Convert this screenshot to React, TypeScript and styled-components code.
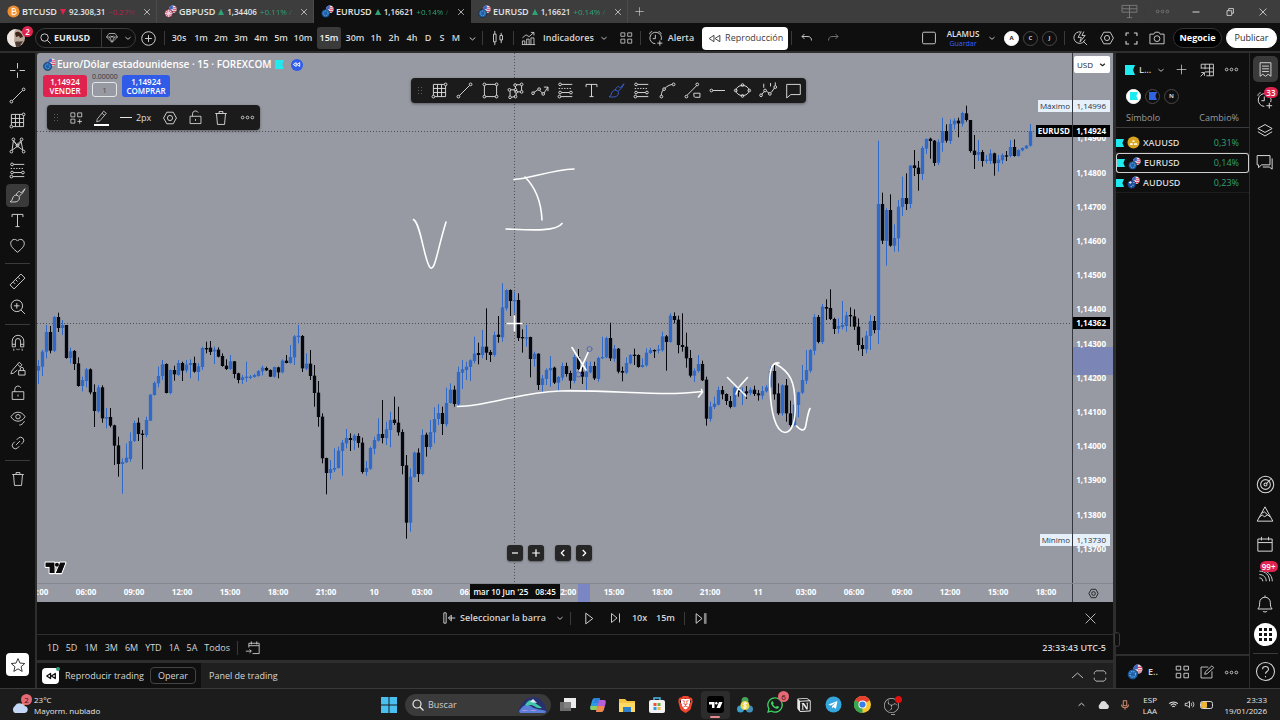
import React from 'react';
import styled, { createGlobalStyle, css } from 'styled-components';
import { FaTelegramPlane, FaWhatsapp } from 'react-icons/fa';
import { SiBrave, SiNotion, SiObsstudio } from 'react-icons/si';

const color = {
  frame: '#2e2e2e',
  panel: '#0f0f0f',
  raised: '#1f1f1f',
  line: '#3a3a3a',
  text: '#d6d6d6',
  chart: '#979aa3',
  up: '#2f69c9',
  down: '#06080d',
  green: '#2fa377',
  red: '#e0234e',
  blue: '#2f5be8',
  cyan: '#1feaf0',
};

const GlobalStyle = createGlobalStyle`
  *, *::before, *::after { box-sizing: border-box; }
  body { margin: 0; background: ${color.frame}; }
  body, button, input, select, table {
    font-family: 'Trebuchet MS', 'Open Sans', 'Noto Sans', sans-serif;
    font-size: 9px;
    line-height: 12px;
    color: ${color.text};
  }
  button { border: 0; padding: 0; background: none; cursor: pointer; }
  svg { display: block; flex: none; }
`;

/* ---------- line icons, drawn on a 28 unit grid ---------- */

const dot = (x: number, y: number, r = 2) => <circle key={`${x}-${y}`} cx={x} cy={y} r={r} />;

const ICONS = {
  cross: <path d="M14 3v8M14 17v8M3 14h8M17 14h8" />,
  trend: <>{dot(5, 23)}{dot(23, 5)}<path d="M6.5 21.5l15-15" /></>,
  grid: <><path d="M5 21V5h16M23 7v16H7M5 11h18M5 17h18M11 5v18M17 5v18" />{dot(23, 5)}{dot(5, 23)}</>,
  pattern: <><path d="M6 21L8 7l5 6 6-6 3 14-8-6-8 6M9 8l5 7 6-7" />{dot(5, 23)}{dot(8, 5)}{dot(14, 14)}{dot(20, 5)}{dot(23, 23)}</>,
  fib: <><path d="M8 5h16M8 17h12M7 23h17" /><path d="M4 11h20" strokeDasharray="2 2" />{dot(6, 5)}{dot(6, 17)}{dot(22, 17)}{dot(5, 23)}</>,
  brush: <path d="M3 23c3-.5 3-3 4-5.500s3-4.500 6-4 4.500 3.500 3.500 6-3.500 4-6.500 4c-3 0-5 .5-7-.5zM12 13.500c1-3 3-5.500 5-5.500 1 0 1 2 2 2s3-3 6-6c-2 5-5 8.500-8.500 11" />,
  text: <path d="M6 9V5h16v4M14 5v18M11 23h6" />,
  heart: <path d="M14 24C8 19 4 15.500 4 11c0-3.500 2.500-6 5.500-6 2 0 3.500 1 4.500 2.500C15 6 16.500 5 18.500 5c3 0 5.500 2.500 5.500 6 0 4.500-4 8-10 13z" />,
  ruler: <path d="M3 19L19 3l6 6L9 25zM8 15l2.500 2.500M11.500 11.500L14 14M15 8l2.500 2.500" />,
  zoomIn: <><circle cx="13" cy="13" r="8.500" /><path d="M19 19l6 6M13 9v8M9 13h8" /></>,
  magnet: <path d="M5 20v-9a9 9 0 0 1 18 0v9h-5v-9a4 4 0 0 0-8 0v9zM5 16h5M18 16h5M7.500 23v3M20.500 23v3M12 23l1 2M16 23l-1 2" />,
  pencilLock: <path d="M13 17l-6 5-4 1 1-4L16 5l4 4-3 4M13 8l4 4M15 18h10v7H15zM17.500 18v-2.500a2.500 2.500 0 0 1 5 0V18" />,
  lock: <path d="M5 12h18v12H5zM9 12V8a5 5 0 0 1 9.500-2M14 16.500v3" />,
  eye: <><path d="M3 12c3-5 7-7 11-7s8 2 11 7c-3 5-7 7-11 7S6 17 3 12z" /><circle cx="14" cy="12" r="3.500" /><path d="M16 25c3 0 6-2 8-6" /></>,
  link: <path d="M11 17l6-6M12 9l3-3a5 5 0 0 1 7 7l-3 3M16 19l-3 3a5 5 0 0 1-7-7l3-3" />,
  trash: <path d="M5 7h18M7 7l1.500 17h11L21 7M11 7V4h6v3" />,
  star: <path d="M14 4l3 7 7.500.700-5.700 5 1.700 7.300L14 20l-6.500 4 1.700-7.300-5.700-5L11 11z" />,
  search: <><circle cx="12" cy="12" r="8" /><path d="M18 18l7 7" /></>,
  gem: <path d="M8 5h12l5 7-11 11L3 12zM3 12h22M9 12l5 10 5-10M11 9l3 3 3-3" />,
  plusCircle: <><circle cx="14" cy="14" r="10" /><path d="M14 9v10M9 14h10" /></>,
  plus: <path d="M14 5v18M5 14h18" />,
  chevron: <path d="M8 12l6 5 6-5" />,
  chevronUp: <path d="M5 18l9-8 9 8" />,
  candles: <path d="M7 8h4v12H7zM9 3v5M9 20v5M17 10h4v7h-4zM19 6v4M19 17v5" />,
  indicators: <path d="M4 24v-6h4v6M11 24v-9h4v9M18 24V13h5v11M3 24h22M4 13l6-5 5 3 8-7M18 4h5v5" />,
  layouts: <path d="M5 5h7v6H5zM17 5h7v6h-7zM5 16h7v7H5zM17 16h7v7h-7z" />,
  layoutsPlus: <path d="M5 5h7v7H5zM17 5h7v7h-7zM5 16h7v7H5zM20.500 16v8M16.500 20h8" />,
  alarm: <path d="M22 17a9 9 0 1 0-9 6M13 9v6h-4M4 8c0-2 2-4 4-4M18 4c2 0 4 2 4 4M20 18v8M16 22h8" />,
  rewind: <path d="M13 8v12l-9-6zM24 8v12l-9-6z" />,
  undo: <path d="M9 6L4 11l5 5M4 11h12c4 0 7 3 7 8" />,
  redo: <path d="M19 6l5 5-5 5M24 11H12c-4 0-7 3-7 8" />,
  square: <rect x="4" y="5" width="20" height="18" rx="2" />,
  quick: <path d="M15 4.500a9 9 0 1 0 7 12M19 19l6 6M16 4l-5 9h5l-2 7 8-10h-5l3-6" />,
  hex: <><path d="M9 5h10l5 9-5 9H9l-5-9z" /><circle cx="14" cy="14" r="4" /></>,
  fullscreen: <path d="M5 10V5h5M18 5h5v5M23 18v5h-5M10 23H5v-5" />,
  camera: <><path d="M3 8h6l2-3h6l2 3h6v15H3z" /><circle cx="14" cy="15" r="4.500" /></>,
  more: <>{dot(6, 14, 2.200)}{dot(14, 14, 2.200)}{dot(22, 14, 2.200)}</>,
  rectangle: <><path d="M7 5h14M7 23h14M5 7v14M23 7v14" />{dot(5, 5)}{dot(23, 5)}{dot(5, 23)}{dot(23, 23)}</>,
  polygon: <><path d="M7 13h5M14 11V8M15 5.500h6M23 7v7M21 16h-4M15 18v3M13 23l-5 1M6 22v-7" />{dot(13.5, 6)}{dot(23, 5)}{dot(5, 13)}{dot(14, 13)}{dot(23, 16)}{dot(15, 16)}{dot(14, 23)}{dot(6, 24)}</>,
  polyline: <><path d="M4 17l6-4M13 14l4 4M19 18l6-9M19 9h6v6" />{dot(3, 18)}{dot(12, 12)}{dot(18, 19)}</>,
  curve: <><path d="M5 21c0-4 1-6 3-8M10 11c3-3 6-5 11-6" />{dot(5, 23)}{dot(23, 5)}{dot(9, 12)}</>,
  segment: <><path d="M6 21L20 7M16 18h9v6h-7c-2 0-2-2-2-6z" />{dot(5, 23)}{dot(21, 5)}</>,
  ray: <><path d="M7 14h18" />{dot(5, 14)}</>,
  ellipse: <><ellipse cx="14" cy="14" rx="9.500" ry="7.500" />{dot(4, 14)}{dot(24, 14)}{dot(14, 6)}{dot(14, 22)}</>,
  elliott: <><path d="M4 20l4-5M11 15l4 3M18 17l5-7M7 4v6M17 3v5M24 2v5" />{dot(3, 21)}{dot(9, 14)}{dot(16, 19)}{dot(24, 9)}</>,
  comment: <path d="M4 5h20v15H10l-6 5z" />,
  pen: <path d="M6 19L18 4l5 4-12 14-6 2zM15 8l5 4" />,
  layers: <path d="M14 5l10 5.500L14 16 4 10.500zM4 15l10 6 10-6" />,
  chat: <path d="M3 5h18v13H9l-4 4v-4H3zM24 9v15l-4-3h-9" />,
  list: <path d="M6 4h16v20l-4-3-4 3-4-3-4 3zM9 9h10M9 13h10M9 17h10" />,
  table: <path d="M5 12V5h19v18H13M5 11h19M11 17h13M11 5v8M18 5v18M4 24l6-6M5 18h5v5" />,
  radar: <><circle cx="14" cy="14" r="11" /><circle cx="14" cy="14" r="6.500" /><circle cx="14" cy="14" r="2" /><path d="M15.500 12.500L21 7" /></>,
  mountain: <path d="M14 4l11 20H3L14 4M9 13l4-2 8 7M6 19l4-4 3 3 5-3" />,
  calendar: <path d="M4 7h20v17H4zM4 12h20M9 4v5M19 4v5" />,
  goTo: <path d="M8 14V7h17v17H14M8 11h17M12 4v5M21 4v5M3 20h9M9 17l3 3-3 3" />,
  feed: <path d="M5 19c3 0 5 2 5 5M5 14c6 0 10 4 10 10M5 9c9 0 15 6 15 15M14 9c6 3 10 8 10 15" />,
  bell: <path d="M4 21h20c-2-2-2.500-4-2.500-9a7.500 7.500 0 0 0-15 0c0 5-.5 7-2.500 9zM11 24c1 1.500 5 1.500 6 0M14 4V2" />,
  help: <><circle cx="14" cy="14" r="12" /><path d="M10 11c0-5 8-5 8 0 0 3-4 3-4 6M14 20v1.500" /></>,
  edit: <path d="M17 5H5v18h18V12M11 17l1-4L23 3l3 3-11 10z" />,
  replayPick: <path d="M5 5h4v18H5zM25 14H13M18 9l-5 5 5 5z" />,
  play: <path d="M9 4l13 10L9 24z" />,
  step: <path d="M5 5l11 9-11 9zM21 5v18" />,
  skip: <><path d="M4 5l11 9-11 9z" /><path d="M21 4v20" strokeWidth="5" opacity="0.600" /></>,
  close: <path d="M6 6l16 16M22 6L6 22" />,
  minus: <path d="M7 14h14" />,
  left: <path d="M17 7l-7 7 7 7" />,
  right: <path d="M11 7l7 7-7 7" />,
  restore: <path d="M7 11h11v11H7zM11 11V6h11v11h-4" />,
  workspace: <path d="M3 5h22v10H3zM3 10h22M14 5v10M14 15v8M10 23h8" />,
  full: <path d="M4 11V8l3-3h14l3 3v3M24 17v3l-3 3H7l-3-3v-3" />,
  mic: <path d="M10 4h8v12h-8zM6 13c0 10 16 10 16 0M14 21v4" />,
  wifi: <path d="M3 12c6-6 16-6 22 0M7 16c4-4 10-4 14 0M11 20c2-2 4-2 6 0" />,
  sound: <path d="M3 11h5l6-5v16l-6-5H3zM18 10c2 2 2 6 0 8M22 7c4 4 4 10 0 14" />,
};
type IconName = keyof typeof ICONS;

const Icon = ({ name, size = 19, weight = 1.4, tone = 'currentColor' }:
  { name: IconName; size?: number; weight?: number; tone?: string }) => (
  <svg width={size} height={size} viewBox="0 0 28 28" fill="none" stroke={tone} strokeWidth={weight}
    strokeLinejoin="round" aria-hidden="true">{ICONS[name]}</svg>
);

const PairIcon = ({ size = 14, kind = 'eu' }: { size?: number; kind?: 'eu' | 'gb' | 'au' | 'gold' | 'btc' }) => {
  if (kind === 'gold') {
    return (
      <svg width={size} height={size} viewBox="0 0 14 14"><circle cx="7" cy="7" r="6.500" fill="#d9a420" />
        <path d="M5.500 6.500l.6-2h1.800l.6 2zM2.800 9.800l.6-2.200h2.600l.6 2.200zM7.400 9.800L8 7.600h2.600l.6 2.200z" fill="#fff3cf" /></svg>
    );
  }
  if (kind === 'btc') {
    return (
      <svg width={size} height={size} viewBox="0 0 14 14"><circle cx="7" cy="7" r="6.500" fill="#ef8e2c" />
        <path d="M5.500 4v6M5 4h3c2 0 2 2.800 0 2.800H5.500h3c2 0 2 3.200 0 3.200H5M6.300 3v1M7.800 3v1M6.300 10v1M7.800 10v1" stroke="#fff" fill="none" /></svg>
    );
  }
  const front = kind === 'gb' ? '#d96a8a' : kind === 'au' ? '#1c4fa0' : '#1d62ac';
  return (
    <svg width={size} height={size} viewBox="0 0 14 14">
      <circle cx="9.500" cy="4.500" r="4" fill="#e9e4ee" />
      <path d="M9.500 3h4M9.500 5h4M7 7h6" stroke="#d8405c" />
      <path d="M9.500.5v4h-4a4 4 0 0 1 4-4z" fill="#3c62c4" />
      <circle cx="5" cy="9" r="4.500" fill={front} stroke={color.panel} strokeWidth="0.500" />
      {kind === 'eu' && <circle cx="5" cy="9" r="2.500" fill="none" stroke="#7fb6dd" strokeDasharray="1 1" />}
      {kind === 'gb' && <path d="M5 5v8M1 9h8M2.500 6.500l5 5M7.500 6.500l-5 5" stroke="#f6dfe6" />}
      {kind === 'au' && <path d="M2 7h3M3.500 5.500v3M6 10h1M7 7h1M4 11.500h1" stroke="#e8dff0" />}
    </svg>
  );
};

const Flag = ({ size = 10, tone = color.cyan }: { size?: number; tone?: string }) => (
  <svg width={size} height={size} viewBox="0 0 10 10" aria-hidden="true"><path d="M0 0h10L8 5l2 5H0z" fill={tone} /></svg>
);

/* ---------- shared pieces ---------- */

const Page = styled.div`
  display: flex; flex-direction: column; min-height: 100vh; background: ${color.frame};
`;
const Row = styled.div<{ $gap?: number }>`
  display: flex; align-items: center; gap: ${p => p.$gap ?? 0}px;
`;
const Spacer = styled.div`flex: 1;`;
const Divider = styled.i<{ $h?: number; $before?: number; $after?: number }>`
  flex: none; width: 1px; height: ${p => p.$h ?? 14}px; background: ${color.line};
  margin-left: ${p => p.$before ?? 0}px; margin-right: ${p => p.$after ?? 0}px;
`;
const IconButton = styled.button<{ $w?: number; $dim?: boolean }>`
  flex: none; display: flex; align-items: center; justify-content: center;
  width: ${p => p.$w ?? 25}px; height: 24px;
  color: ${p => (p.$dim ? '#7a7a7a' : color.text)};
`;
const Badge = styled.span`
  position: absolute; top: 0; right: 0; min-width: 11px; height: 11px; padding: 0 2px; border-radius: 6px;
  background: ${color.red}; color: #fff; font-size: 8px; line-height: 11px; text-align: center; font-weight: 600;
`;

/* ---------- window tabs ---------- */

const TabBar = styled.nav`
  display: flex; align-items: center; height: 23px; background: #3d3d3d;
`;
const Tab = styled.div<{ $active?: boolean }>`
  display: flex; align-items: center; width: 157px; height: 23px; padding-left: 7px; gap: 2px;
  border-right: 1px solid ${p => (p.$active ? color.panel : '#4b4b4b')};
  background: ${p => (p.$active ? color.panel : 'transparent')};
`;
const TabLink = styled.a`
  flex: 1; display: flex; align-items: center; gap: 3px; white-space: nowrap;
  color: #e4e4e4; font-size: 8px; font-weight: 600; text-decoration: none;
  strong { font-size: 9px; font-weight: 600; }
`;
const Trend = styled.span<{ $down?: boolean }>`
  color: ${p => (p.$down ? '#b8264c' : color.green)}; font-weight: 500;
  mask-image: linear-gradient(90deg, #000 75%, rgba(0, 0, 0, 0.4));
`;
const Arrow = ({ down }: { down?: boolean }) => (
  <svg width="6" height="6" viewBox="0 0 6 6"><path d={down ? 'M0 0h6L3 6z' : 'M0 6h6L3 0z'} fill={down ? color.red : color.green} /></svg>
);

const TABS = [
  { kind: 'btc' as const, name: 'BTCUSD', price: '92.308,31', pct: '−0.27%', down: true },
  { kind: 'gb' as const, name: 'GBPUSD', price: '1,34406', pct: '+0.11% /' },
  { kind: 'eu' as const, name: 'EURUSD', price: '1,16621', pct: '+0.14% /', active: true },
  { kind: 'eu' as const, name: 'EURUSD', price: '1,16621', pct: '+0.14% /' },
];

/* ---------- top toolbar ---------- */

const Toolbar = styled.header`
  display: flex; align-items: center; height: 28px; padding: 2px 3px 0 5px; background: ${color.panel};
`;
const AvatarBox = styled.div`position: relative; width: 28px; height: 24px; padding-top: 3px; margin-right: 2px;`;
const SearchPill = styled.div`
  display: flex; align-items: center; width: 101px; height: 20px; border: 1px solid #3c3c3c; border-radius: 10px;
`;
const SymbolButton = styled.button`
  display: flex; align-items: center; gap: 2px; width: 66px; height: 18px; padding-left: 3px;
  border-right: 1px solid #3c3c3c; font-weight: 700; color: #e8e8e8;
`;
const Interval = styled.button<{ $w: number; $on?: boolean }>`
  width: ${p => p.$w}px; height: 22px; font-weight: 600;
  ${p => p.$on && css`margin: 0 2px; border-radius: 3px; background: #3b3b3b; color: #f0f0f0;`}
`;
const TextButton = styled.button`
  display: flex; align-items: center; gap: 3px; height: 24px; font-weight: 600; white-space: nowrap;
`;
const ReplayButton = styled.button`
  display: flex; align-items: center; justify-content: center; gap: 3px; width: 86px; height: 23px;
  margin: 0 3px 0 8px; border-radius: 4px; background: #fff; color: #3c3c3c; white-space: nowrap;
`;
const LayoutName = styled.button`
  width: 38px; font-size: 8px; font-weight: 600; line-height: 11px; color: #e2e2e2;
  small { display: block; font-size: 7px; line-height: 9px; font-weight: 400; color: #3763ff; }
`;
const Round = styled.button<{ $on?: boolean }>`
  width: 15px; height: 15px; margin: 0 2px; border-radius: 50%; font-size: 6px; font-weight: 700; line-height: 13px;
  border: 1px solid ${p => (p.$on ? '#fff' : '#484848')};
  display: flex; align-items: center; justify-content: center;
  background: ${p => (p.$on ? '#fff' : 'transparent')}; color: ${p => (p.$on ? '#222' : '#ccc')};
`;
const Pill = styled.button<{ $solid?: boolean }>`
  height: 20px; border-radius: 10px; font-size: 9px; font-weight: ${p => (p.$solid ? 500 : 700)};
  width: ${p => (p.$solid ? 51 : 49)}px; display: flex; align-items: center; justify-content: center;
  border: 1px solid ${p => (p.$solid ? '#fff' : '#333')}; margin-left: 4px;
  background: ${p => (p.$solid ? '#fff' : '#000')}; color: ${p => (p.$solid ? '#2c2c2c' : '#fff')};
`;

const INTERVALS: [string, number][] = [
  ['30s', 24], ['1m', 20], ['2m', 20], ['3m', 20], ['4m', 20], ['5m', 20], ['10m', 24], ['15m', 24],
  ['30m', 24], ['1h', 18], ['2h', 18], ['4h', 18], ['D', 14], ['S', 14], ['M', 14],
];

/* ---------- body layout ---------- */

const Main = styled.main`flex: 1; display: flex; margin-top: 2px;`;
const LeftRail = styled.aside`
  width: 35px; margin-right: 2px; padding: 5px 0 11px; background: ${color.panel};
  display: flex; flex-direction: column; align-items: center;
`;
const Tool = styled.button<{ $on?: boolean; $light?: boolean }>`
  flex: none; display: flex; align-items: center; justify-content: center; width: 23px; height: 23px; margin: 1px 0;
  border-radius: 4px; color: ${p => (p.$light ? '#222' : color.text)};
  background: ${p => (p.$light ? '#fff' : p.$on ? '#3a3a3a' : 'transparent')};
`;
const RailLine = styled.i<{ $tight?: boolean }>`
  flex: none; width: 25px; height: 1px; margin: ${p => (p.$tight ? '2px 0 4px' : '5px 0')}; background: ${color.line};
`;
const Center = styled.section`flex: 1; min-width: 0; display: flex; flex-direction: column;`;

/* ---------- chart ---------- */

const PlotRow = styled.div`
  flex: 1; min-height: 400px; position: relative; display: flex; background: ${color.chart}; border-top-left-radius: 3px;
`;
const Plot = styled.div`flex: 1; min-width: 0; position: relative;`;
const PlotSvg = styled.svg`position: absolute; inset: 0; width: 100%; height: 100%;`;
const PriceAxis = styled.div`
  position: relative; width: 41px; border-left: 1px solid #33363d; display: flex; flex-direction: column;
  text-align: right; padding-right: 7px; font-size: 8px; font-weight: 700; color: #fff;
`;
const PriceTick = styled.div`position: relative; flex: 34; display: flex; align-items: center; justify-content: flex-end;`;
const Gap = styled.div<{ $n: number }>`flex: ${p => p.$n};`;
const Band = styled.i`
  position: absolute; left: 0; right: 0; top: 55.5%; height: 5.300%; background: #7b86b6;
`;
const Tag = styled.div<{ $y: number; $tone: 'light' | 'dark' }>`
  position: absolute; right: 3px; top: ${p => p.$y}%; display: flex; gap: 1px; height: 12px; margin-top: -6px;
  font-size: 8px; line-height: 12px; font-weight: ${p => (p.$tone === 'dark' ? 700 : 400)};
  color: ${p => (p.$tone === 'dark' ? '#fff' : '#2b3240')};
  span { padding: 0 2px; background: ${p => (p.$tone === 'dark' ? '#000' : '#e6f0fb')}; }
  span:last-child { width: 37px; padding: 0 4px 0 0; text-align: right; }
`;
const CurrencyBox = styled.label`
  position: absolute; top: 3px; right: 3px; width: 36px; height: 17px; border-radius: 2px; background: #fff; color: #222;
  svg { position: absolute; right: 2px; top: 3px; }
  select { width: 100%; height: 17px; padding: 0 3px; border: 0; appearance: none; background: none; color: #222; font-size: 8px; }
`;
const TimeRow = styled.div`
  display: flex; height: 19px; background: ${color.chart}; border-top: 1px solid #85878f;
`;
const TimeAxis = styled.div`position: relative; flex: 1; min-width: 0; overflow: hidden;`;
const TimeTicks = styled.div`
  position: relative; display: flex; margin: 0 2px 0 -23px; height: 16px; align-items: center;
  span { flex: 1; text-align: center; font-size: 8px; font-weight: 700; color: #fff; }
`;
const TimeBand = styled.i`position: absolute; left: 52.300%; width: 12px; top: 0; bottom: 0; background: #7b86c4;`;
const TimeTag = styled.div`
  position: absolute; left: 41.800%; top: 0; width: 90px; height: 15px; background: #0c0c0c; color: #fff;
  font-size: 8px; line-height: 16px; font-weight: 600; white-space: pre; display: flex; justify-content: center; gap: 7px;
`;
const AxisCorner = styled.button`
  width: 41px; border-left: 1px solid #33363d; color: #222; display: flex; align-items: center; justify-content: center;
`;

const Legend = styled.div`position: absolute; left: 6px; top: 4px; display: flex; flex-direction: column; gap: 2px;`;
const Title = styled.h1`margin: 0; font-size: 10px; line-height: 15px; font-weight: 600; color: #fff; white-space: nowrap;`;
const Marks = styled.div`display: flex; align-items: center; gap: 7px; margin-left: 2px;`;
const ReplayDot = styled.span`
  display: flex; align-items: center; justify-content: center; width: 12px; height: 12px; border-radius: 50%; background: ${color.blue};
`;
const Trade = styled.button<{ $buy?: boolean }>`
  width: ${p => (p.$buy ? 48 : 44)}px; height: 22px; border-radius: 3px; color: #fff; font-size: 8px; line-height: 9px; font-weight: 600;
  background: ${p => (p.$buy ? color.blue : color.red)};
`;
const Quantity = styled.label`
  display: block; width: 25px; font-size: 7px; line-height: 6px; color: #33363d; text-align: center;
  input { display: block; width: 25px; height: 15px; margin-top: 2px; border: 1px solid #e4e6ea; border-radius: 3px; background: none;
    color: #4b4e57; font-size: 8px; text-align: center; padding: 0; }
`;
const Floating = styled.div<{ $x: number; $y: number; $w: number }>`
  position: absolute; left: ${p => p.$x}px; top: ${p => p.$y}px; width: ${p => p.$w}px; height: 25px; display: flex;
  align-items: center; border-radius: 4px; background: #1b1b1b; box-shadow: 0 1px 3px rgba(0, 0, 0, 0.4);
  > button { flex: 1; display: flex; align-items: center; justify-content: center; color: #dcdcdc; }
`;
const Grip = styled.i`
  flex: none; width: 6px; height: 10px; margin: 0 4px 0 6px; opacity: 0.6;
  background: radial-gradient(circle, #888 40%, transparent 45%) 0 0 / 3px 3px;
`;
const PenTool = styled.button`
  flex-direction: column;
  &::after { content: ''; width: 15px; height: 2px; background: #fff; }
`;
const WidthTool = styled.button`
  gap: 4px; min-width: 42px; font-size: 9px;
  &::before { content: ''; width: 12px; height: 1px; background: #e4e4e4; }
`;
const ZoomControls = styled.div`
  position: absolute; left: 45.400%; bottom: 22px; display: flex; gap: 5px;
  button { display: flex; align-items: center; justify-content: center; width: 16px; height: 16px; border-radius: 3px;
    background: #262626; color: #fff; box-shadow: 0 1px 2px rgba(0, 0, 0, 0.4); }
  button:nth-child(3) { margin-left: 6px; }
`;
const Brand = styled.a`position: absolute; left: 7px; bottom: 8px;`;

/* Each bar: direction, then high, body top, body bottom and low. */
const SERIES: { base: number; bars: string }[] = [
  {
    base: 651,
    bars: `U270 288 302 342,U240 245 290 318,U165 186 245 265,D168 186 242 250,U138 141 242 246,D128 141 174 186,U150 165 174 195,D165 165 264 266,U233 244 264 280,D240 243 282 300,D262 280 348 350,U320 330 348 364,U294 298 333 352,D295 298 367 373,D343 366 423 471,U345 352 424 428,D346 352 445 458,U414 441 446 475,D414 441 467 472,D464 466 527 585,D500 526 582 620,U565 576 582 671,U520 563 577 579,U487 513 567 575,U452 459 513 516,D443 458 492 513,D480 491 494 598,U440 450 495 502,U372 374 452 453,U334 339 375 377,U290 318 340 352,U270 283 318 330,D280 282 369 370,U298 300 369 373,D287 300 313 332,U270 279 315 317,D275 279 302 333,U270 284 301 308,U268 279 285 325,D260 279 305 308,U280 289 306 332,U230 234 291 300,D215 234 237 250,D213 233 246 255,U230 239 244 282,D232 239 260 262,D250 258 288 290,D268 287 297 300,U255 274 297 300,D273 274 312 325,D308 310 330 340,U315 322 330 342,U275 320 323 336,U315 320 323 327,U311 315 321 323,U300 303 318 320,U287 293 304 316,D290 294 301 303,D298 300 320 321,U290 291 320 323,D290 292 307 325,U268 272 307 310,D255 272 279 280,U225 261 279 281,U195 199 262 285,U165 197 200 220,D195 198 295 306,U250 281 296 300,D240 281 318 330,D285 317 369 410,D333 368 441 470,D430 440 565 580,D563 564 609 673,U570 597 609 628,U535 594 599 606,U530 542 594 596,U510 518 543 617,U477 504 520 535,D490 504 510 543,U492 497 512 540,D490 498 519 533,D503 518 606 611,U573 594 606 617,U530 534 596 600,U500 510 536 553,U445 492 512 515,D390 492 504 520,U455 478 504 525,U425 450 480 532,D380 449 459 465,D410 458 487 497,D478 486 588 613,D555 586 758 806,U595 620 758 785,U545 548 621 623,D535 548 612 636,U478 495 612 616,D488 494 531 560,U450 486 531 538,U412 447 487 520,U402 429 447 465,D410 429 462 495,U353 399 463 470,U340 359 399 400,D347 359 402 410,U290 306 403 408,U270 298 308 357,U275 290 300 330,U268 271 291 333,U200 251 273 280,D218 249 255 283,U180 230 255 265,D115 230 248 270,D240 246 255 276,U185 195 255 260,D138 194 201 218,U40 112 202 215,U58 60 115 122,D58 60 93 138,U65 90 94 130,D70 90 204 213,D178 201 204 248,U165 202 204 230,D200 201 267 322,U245 251 267 290,D250 251 345 360,U315 325 345 368,U295 300 327 345,U258 294 301 350,D290 293 338 342,U318 321 338 365,U278 288 323 332,D278 288 312 320,D302 309 332 356,U255 261 333 340,D237 261 297 300,D290 305 320 342,U275 305 321 363,U275 288 307 310,D275 288 325 330,U260 264 327 335,U200 261 265 267,U200 204 262 265,D158 204 265 273,U225 236 266 275,D234 236 305 310,D290 303 308 334,U262 279 308 312,U252 255 280 283,D236 254 257 285,D253 255 291 293,U265 285 291 293,U235 248 286 290,U233 240 249 252,D238 240 243 264,U225 238 242 250,U185 199 241 245,D195 199 216 302,U130 137 216 218,D127 138 150 160,D137 149 225 250,D130 225 231 245,D188 230 265 293,D240 264 317 322,U295 302 317 336,U255 282 303 308,D272 282 331 333,D320 329 446 467,U395 410 447 455,U380 401 411 417,U350 360 404 406,D348 360 373 388,D370 372 393 405,D378 393 411 415,U350 353 410 412,D350 353 366 380,U352 366 368 405,D348 364 370 387,U352 359 369 376,D347 359 372 378,D360 370 376 392,U348 363 377 388,U345 352 364 368,U290 303 352 354,D285 303 373 389,D340 370 430 435,U343 346 430 437,D327 346 430 455,D392 430 465 470,U380 404 465 467,U365 367 405 442,U285 330 368 372,U240 300 332 342,U237 240 302 308,U133 141 242 255,D135 141 216 220,U102 110 216 222,D88 111 116 150,D58 114 147 150,D143 147 177 192,U145 168 176 190,U93 165 171 178,U125 136 168 185,D112 135 139 170,D118 139 170 180,D145 170 225 242,D203 225 237 258,U183 197 238 250,U135 153 198 240,D138 153 180 190`,
  },
  {
    base: 111,
    bars: `U152 342 720 762,D308 342 452 462,U355 360 453 527,D313 360 467 470,U403 444 467 485,U330 350 445 485,U260 324 351 378,D250 324 342 360,U225 227 342 355,D180 226 234 258,D213 233 252 302,U168 174 252 270,U145 147 176 192,D143 146 153 206,D150 152 219 228,U148 156 218 225,U83 123 158 185,D103 123 152 158,U88 102 153 162,U85 92 103 118,D83 92 100 142,U65 69 101 110,D47 70 90 95,D90 90 183 188,D135 182 195 237,U150 186 194 213,D180 186 213 230,U195 209 212 220,U178 190 213 222,D188 190 220 257,U195 209 219 245,U190 195 211 222,D183 196 199 213,U150 171 198 202,D148 171 198 200,U178 180 198 200,U172 174 181 184,U165 167 175 177,U102 123 167 170`,
  },
];
const CANDLES = SERIES.flatMap(({ base, bars }) => bars.split(',').map(bar => {
  const [high, top, bottom, low] = bar.slice(1).split(' ').map(v => Number(v) + base);
  return { up: bar[0] === 'U', high, top, bottom, low };
}));

const PriceChart = () => (
  <PlotSvg viewBox="0 0 3105 1590" preserveAspectRatio="none" role="img" aria-label="EURUSD, 15 minutos">
    <g stroke="#4d5059" strokeDasharray="1 2">
      <path d="M0 235.500h3105M0 811.500h3105M1432.500 0v1590" vectorEffect="non-scaling-stroke" />
    </g>
    {CANDLES.map((c, i) => (
      <g key={i} fill={c.up ? color.up : color.down}>
        <rect x={3 + 12 * i} y={c.high} width="3" height={c.low - c.high} />
        <rect x={-0.5 + 12 * i} y={c.top} width="10" height={Math.max(4, c.bottom - c.top)} />
      </g>
    ))}
    <g transform="scale(3) translate(-37 -53)" fill="none" stroke="#fff" strokeWidth="1.600" strokeLinecap="round" strokeLinejoin="round">
      <path d="M413.500 219.500C421 224 424 260 430 267.500C435 272 437 251 446 222" />
      <path d="M514 179.500C530 179 550 170 574 169M525 177C532 184 541 197 542 220M506 229C530 230 556 232 562 223.500" />
      <path d="M457.500 406.500C490 406 515 393 560 391C600 390 640 394 675 393.500C688 393 696 392 702 391.500M701.500 389.500L702.500 392L698.500 397" />
      <path d="M572 347.500L586 370M588 352.500C585 360 582 365 580 371" />
      <path d="M727.500 377.500L746 396M747.500 377.500L739 387L736 394" />
      <path d="M779 363C770 361 769 376 770 390C771 410 775 432 785 432.500C793 432 796 418 795 403C795 382 790 372 776 364" />
      <path d="M796.500 426C800 430 804 432 805.500 427C807 420 808 412 810 408.500" />
      <g stroke="#5468b4" strokeWidth="1"><circle cx="589.500" cy="349" r="2.500" /><circle cx="578.500" cy="374.500" r="2.500" /></g>
      <path d="M506.500 323.500h16M514.500 315.500v16" strokeLinecap="butt" />
    </g>
  </PlotSvg>
);

const PRICES = ['1,14900', '1,14800', '1,14700', '1,14600', '1,14500', '1,14400', '1,14300', '1,14200', '1,14100',
  '1,14000', '1,13900', '1,13800', '1,13700'];
const TIMES = ['03:00', '06:00', '09:00', '12:00', '15:00', '18:00', '21:00', '10', '03:00', '06:00', '09:00', '12:00',
  '15:00', '18:00', '21:00', '11', '03:00', '06:00', '09:00', '12:00', '15:00', '18:00'];
const DRAW_TOOLS: IconName[] = ['grid', 'trend', 'rectangle', 'polygon', 'polyline', 'fib', 'text', 'brush', 'fib', 'curve',
  'segment', 'ray', 'ellipse', 'elliott', 'comment'];

/* ---------- bars under the chart ---------- */

const ReplayBar = styled.div`
  display: grid; grid-template-columns: 1fr auto 1fr; align-items: center; height: 32px; background: ${color.panel};
  > button:last-child { grid-column: 3; justify-self: end; margin-right: 10px; }
`;
const ReplayControls = styled.div`grid-column: 2; display: flex; align-items: center; padding-left: 8px;`;
const Label = styled.button<{ $w?: number }>`
  ${p => p.$w && css`width: ${p.$w}px;`}
  font-weight: 600; white-space: nowrap;
`;
const RangeBar = styled.div`
  display: flex; align-items: center; gap: 7px; height: 26px; padding: 0 7px 0 10px; background: ${color.panel};
  border-top: 1px solid ${color.frame}; margin-bottom: 3px;
`;
const Range = styled.button`font-weight: 500; white-space: nowrap;`;
const PanelTabs = styled.div`display: flex; align-items: center; height: 25px; background: ${color.raised}; padding-right: 3px;`;
const PanelTab = styled.div<{ $on?: boolean }>`
  display: flex; align-items: center; gap: 5px; height: 25px; padding: 0 5px; font-size: 9px; font-weight: 500; white-space: nowrap;
  ${p => p.$on && css`width: 164px; justify-content: space-between; background: ${color.panel};`}
  ${p => !p.$on && css`padding-left: 8px;`}
`;
const ReplayBadge = styled.span`
  position: relative; display: flex; align-items: center; justify-content: center; width: 17px; height: 16px; border-radius: 4px; background: #fff;
  &::after { content: ''; position: absolute; right: -1px; top: -1px; width: 4px; height: 4px; border-radius: 50%; background: ${color.green}; }
`;
const Outline = styled.button`width: 46px; height: 17px; border: 1px solid #444; border-radius: 4px; font-weight: 500;`;

/* ---------- watchlist ---------- */

const Watchlist = styled.aside`
  position: relative; width: 133px; margin-left: 3px; display: flex; flex-direction: column; background: ${color.panel};
`;
const ListHeader = styled.div`
  display: flex; align-items: center; height: 33px; padding: 0 5px 0 9px;
  > button:first-child { flex: 1; display: flex; align-items: center; gap: 4px; font-weight: 600; }
`;
const Badges = styled.div`display: flex; height: 20px; padding-left: 8px; align-items: center;`;
const Quotes = styled.table`
  width: 100%; border-collapse: separate; border-spacing: 0; margin-top: 2px;
  th { height: 20px; padding: 0 10px; text-align: left; font-weight: 400; color: #9b9b9b; border-bottom: 1px solid ${color.line}; }
  th:last-child, td:last-child { text-align: right; padding-right: 10px; }
  td { height: 20px; padding: 0; font-size: 9px; font-weight: 600; border-bottom: 1px solid #1e1e1e; }
  td:last-child { color: ${color.green}; font-weight: 500; }
  tbody::before { content: ''; display: block; height: 5px; }
`;
const Quote = styled.tr<{ $on?: boolean }>`
  ${p => p.$on && css`
    td { border-top: 1px solid #cfcfcf; border-bottom-color: #cfcfcf; }
    td:first-child { border-left: 1px solid #cfcfcf; border-radius: 3px 0 0 3px; }
    td:last-child { border-right: 1px solid #cfcfcf; border-radius: 0 3px 3px 0; padding-right: 9px; }
  `}
`;
const ListFooter = styled.div`
  display: flex; align-items: center; height: 34px; margin-top: auto; border-top: 2px solid ${color.frame}; padding: 0 5px 0 11px;
  > span { flex: 1; padding-left: 5px; font-weight: 600; }
`;
const Collapse = styled.button`
  position: absolute; left: -2px; bottom: 41px; width: 6px; height: 15px; border: 1px solid #3c3c3c; border-radius: 3px; background: ${color.panel};
`;

const RightRail = styled.aside`
  width: 31px; border-left: 1px solid ${color.frame}; background: ${color.panel}; display: flex; flex-direction: column; align-items: center; padding-top: 3px;
`;
const RailButton = styled.button<{ $on?: boolean; $gap?: number }>`
  position: relative; flex: none; display: flex; align-items: center; justify-content: center; width: 25px; height: 26px;
  margin: 0 0 ${p => p.$gap ?? 4}px; border-radius: 5px; color: ${color.text}; background: ${p => (p.$on ? '#3a3a3a' : 'transparent')};
`;
const Apps = styled.span`
  display: flex; align-items: center; justify-content: center; width: 23px; height: 23px; border-radius: 50%; background: #fff;
`;

/* ---------- taskbar ---------- */

const Taskbar = styled.footer`
  display: grid; grid-template-columns: 1fr auto 1fr; align-items: center; height: 32px; padding: 0 10px;
  border-top: 1px solid #3a3a3a; background: #1c1c1c; color: #e6e6e6; font-size: 8px; line-height: 11px;
`;
const Weather = styled.div`display: flex; align-items: center; gap: 2px;`;
const WeatherIcon = styled.div`position: relative; width: 22px; height: 22px;`;
const SoftBadge = styled(Badge)`background: #e46a76; color: #3a1010; font-weight: 400;`;
const SearchBox = styled.label`
  position: relative; display: flex; align-items: center; gap: 3px; width: 146px; height: 22px; margin: 0 2px; padding: 0 3px 0 6px; border-radius: 11px; background: #3a3a3a;
  input { flex: 1; min-width: 0; border: 0; padding: 0; background: none; outline: 0; }
  input::placeholder { color: #d0d0d0; opacity: 1; }
`;
const AppButton = styled.button<{ $on?: boolean }>`
  position: relative; display: flex; align-items: center; justify-content: center; width: 29px; height: 28px; border-radius: 4px;
  &:nth-of-type(odd) { margin-left: 1px; }
  ${p => p.$on && css`
    background: #2c2c2c;
    &::after { content: ''; position: absolute; bottom: 1px; left: 9px; width: 10px; height: 2px; border-radius: 1px; background: #e58a8f; }
  `}
`;
const Tray = styled.div`display: flex; align-items: center; justify-content: flex-end; padding-right: 3px; > * { flex: none; }`;
const Status = styled.div`display: flex; align-items: center; gap: 5px; margin-left: 11px;`;
const TrayText = styled.span<{ $w: number }>`width: ${p => p.$w}px; text-align: right;`;

const TvMark = ({ size = 23, ink = '#0a0a0a', edge = '#fff' }: { size?: number; ink?: string; edge?: string }) => (
  <svg width={size} height={size * 0.6} viewBox="0 0 40 24" aria-hidden="true">
    <path d="M3 3h15v18h-8V10H3zM28 3h9l-7 18h-9z" fill={ink} stroke={edge} strokeWidth="4" paintOrder="stroke" strokeLinejoin="round" />
    <circle cx="22.500" cy="6.500" r="3.500" fill={ink} stroke={edge} strokeWidth="3" paintOrder="stroke" />
    <path d="M3 3h15v18h-8V10H3zM28 3h9l-7 18h-9z" fill={ink} />
  </svg>
);

const taskApps: { name: string; on?: boolean; art: React.ReactNode }[] = [
  { name: 'Vista de tareas', art: <svg width="18" height="18" viewBox="0 0 18 18"><path d="M5 2h12v10H5z" fill="#ececec" /><path d="M1 6h11v9H1z" fill="#777" opacity="0.9" /></svg> },
  { name: 'Copilot', art: <svg width="18" height="18" viewBox="0 0 18 18"><path d="M6 2h5L8 14H3c-2 0-2-2-1.500-4L3 5c.5-2 1.500-3 3-3z" fill="#2b9be8" /><path d="M6 2h5l-1.500 5H4z" fill="#2f7fe0" /><path d="M1.600 10h7L8 14H3c-2 0-2-2-1.400-4z" fill="#8fce5a" /><path d="M10 4h5c2 0 2 2 1.500 4L15 13c-.5 2-1.500 3-3 3H7z" fill="#b65fd8" /><path d="M8.500 10h7L15 13c-.5 2-1.500 3-3 3H7z" fill="#f08a4b" /></svg> },
  { name: 'Explorador', art: <svg width="18" height="18" viewBox="0 0 18 18"><path d="M1 3h6l2 2h8v11H1z" fill="#f5c443" /><path d="M1 7h16v9H1z" fill="#ffd966" /><path d="M5 11h8v5H5z" fill="#2d7fc9" /></svg> },
  { name: 'Microsoft Store', art: <svg width="18" height="18" viewBox="0 0 18 18"><path d="M6 5V2h6v3" fill="none" stroke="#4db6e8" strokeWidth="1.5" /><rect x="1" y="4" width="16" height="13" rx="2" fill="#f2f2f2" /><path d="M5.500 7h3v3h-3z" fill="#e8543a" /><path d="M9.500 7h3v3h-3z" fill="#6bb043" /><path d="M5.500 11h3v3h-3z" fill="#2b9be8" /><path d="M9.500 11h3v3h-3z" fill="#f0b93a" /></svg> },
  { name: 'Brave', art: <svg width="17" height="17" viewBox="0 0 17 17"><path d="M4 3h9v11H4z" fill="#fff" /><SiBrave size={17} color="#f0452f" /></svg> },
  { name: 'TradingView', on: true, art: <svg width="17" height="17" viewBox="0 0 17 17"><rect width="17" height="17" rx="3" fill="#000" /><path d="M2 6h5.500v6H5V8.500H2zM12 6h3.500L13 12H9.500z" fill="#fff" /><circle cx="9.300" cy="7.200" r="1.200" fill="#fff" /></svg> },
  { name: 'Finanzas', art: <svg width="18" height="18" viewBox="0 0 18 18"><circle cx="9" cy="4.500" r="3.500" fill="#4aa35a" /><circle cx="4.500" cy="13" r="3.500" fill="#3ba0c8" /><circle cx="13.500" cy="13" r="3.500" fill="#3f8fb8" /><circle cx="9" cy="9.500" r="4.500" fill="#e9d44e" /><path d="M11 7.500c-3-1.500-4.500 1-2 2s1 3.500-2 2M9 6v7" stroke="#fff" fill="none" /></svg> },
  { name: 'WhatsApp', art: <><FaWhatsapp size={18} color="#3fd264" /><SoftBadge>6</SoftBadge></> },
  { name: 'Notion', art: <SiNotion size={14} color="#e8e8e8" /> },
  { name: 'Telegram', art: <svg width="17" height="17" viewBox="0 0 17 17"><circle cx="8.500" cy="8.500" r="8" fill="#35a6de" /><g transform="translate(3 4)"><FaTelegramPlane size={10} color="#fff" /></g></svg> },
  { name: 'Chrome', art: <svg width="17" height="17" viewBox="0 0 18 18"><circle cx="9" cy="9" r="9" fill="#f7c62f" /><path d="M9 9L1.200 4.500a9 9 0 0 1 15.600 0z" fill="#e5402f" /><path d="M9 9v9A9 9 0 0 1 1.200 4.500z" fill="#36a552" /><circle cx="9" cy="9" r="4.300" fill="#fff" /><circle cx="9" cy="9" r="3.300" fill="#3a7de8" /></svg> },
  { name: 'OBS', art: <svg width="20" height="20" viewBox="0 0 20 20"><g transform="translate(1 3)"><SiObsstudio size={15} color="#b8b8b8" /></g><circle cx="15.500" cy="4.500" r="3.500" fill="#e01010" /><path d="M8 19.500h4" stroke="#999" /></svg> },
];

export default function App() {
  return (
    <Page>
      <GlobalStyle />
      <TabBar>
        {TABS.map((t, i) => (
          <Tab key={i} $active={t.active}>
            <PairIcon kind={t.kind} size={13} />
            <TabLink href="#"><strong>{t.name}</strong><Arrow down={t.down} /><span>{t.price}</span><Trend $down={t.down}>{t.pct}</Trend></TabLink>
            <IconButton $w={19} aria-label="Cerrar pestaña"><Icon name="close" size={10} weight={2.200} /></IconButton>
          </Tab>
        ))}
        <IconButton $w={22} aria-label="Nueva pestaña"><Icon name="plus" size={13} /></IconButton>
        <Spacer />
        <IconButton $w={32} $dim aria-label="Espacios"><Icon name="workspace" /></IconButton>
        <Divider $h={15} />
        <IconButton $w={33} $dim aria-label="Más"><Icon name="more" size={17} /></IconButton>
        <IconButton $w={34} aria-label="Minimizar"><Icon name="minus" size={14} weight={2} /></IconButton>
        <IconButton $w={33} aria-label="Restaurar"><Icon name="restore" size={12} weight={2} /></IconButton>
        <IconButton $w={34} aria-label="Cerrar"><Icon name="close" size={12} weight={2} /></IconButton>
      </TabBar>

      <Toolbar>
        <AvatarBox>
          <svg width="20" height="18" viewBox="0 0 20 18" aria-label="Perfil">
            <circle cx="11" cy="9" r="9" fill="#b8a698" />
            <path d="M2 9a9 9 0 0 1 9-9c-3 4-1 7-2 12l3 6A9 9 0 0 1 2 9z" fill="#efe6df" />
            <path d="M10 4c3-3 7 0 8 4l-3 1-1-2-3 1z" fill="#3c2418" /><path d="M10 13c2-1 5 0 8-1l-3 5-4 1z" fill="#4b3a33" />
          </svg>
          <Badge>2</Badge>
        </AvatarBox>
        <SearchPill>
          <SymbolButton><Icon name="search" size={13} weight={1.800} />EURUSD</SymbolButton>
          <IconButton $w={20} aria-label="Activos"><Icon name="gem" size={14} /></IconButton>
          <Icon name="chevron" size={12} weight={2} />
        </SearchPill>
        <IconButton aria-label="Comparar"><Icon name="plusCircle" /></IconButton>
        <Divider $before={3} $after={2} />
        {INTERVALS.map(([label, w]) => <Interval key={label} $w={w} $on={label === '15m'}>{label}</Interval>)}
        <IconButton $w={19} aria-label="Intervalos"><Icon name="chevron" size={13} weight={2} /></IconButton>
        <Divider />
        <IconButton $w={30} aria-label="Velas"><Icon name="candles" size={18} /></IconButton>
        <Divider />
        <IconButton $w={29} aria-label="Abrir indicadores"><Icon name="indicators" size={17} /></IconButton>
        <TextButton>Indicadores</TextButton>
        <IconButton $w={20} aria-label="Favoritos"><Icon name="chevron" size={12} weight={2} /></IconButton>
        <IconButton $w={24} aria-label="Plantillas"><Icon name="layouts" size={16} /></IconButton>
        <Divider $before={2} $after={6} />
        <TextButton><Icon name="alarm" size={18} />Alerta</TextButton>
        <ReplayButton><Icon name="rewind" size={15} weight={1.800} />Reproducción</ReplayButton>
        <Divider />
        <IconButton $w={30} aria-label="Deshacer"><Icon name="undo" size={14} weight={1.800} /></IconButton>
        <IconButton $w={22} $dim aria-label="Rehacer"><Icon name="redo" size={14} weight={1.800} /></IconButton>
        <Spacer />
        <IconButton $w={30} aria-label="Diseño"><Icon name="square" size={18} /></IconButton>
        <LayoutName>ALAMUS<small>Guardar</small></LayoutName>
        <IconButton $w={20} aria-label="Diseños"><Icon name="chevron" size={12} weight={2} /></IconButton>
        <Round $on>A</Round><Round>C</Round><Round>J</Round>
        <Divider $before={5} />
        <IconButton $w={30} aria-label="Búsqueda rápida"><Icon name="quick" size={18} /></IconButton>
        <IconButton $w={24} aria-label="Configuración"><Icon name="hex" size={18} /></IconButton>
        <IconButton aria-label="Pantalla completa"><Icon name="fullscreen" size={17} weight={1.800} /></IconButton>
        <IconButton aria-label="Captura"><Icon name="camera" size={18} /></IconButton>
        <Pill>Negocie</Pill>
        <Pill $solid>Publicar</Pill>
      </Toolbar>

      <Main>
        <LeftRail>
          {(['cross', 'trend', 'grid', 'pattern', 'fib', 'brush', 'text', 'heart'] as IconName[]).map(n => (
            <Tool key={n} $on={n === 'brush'} aria-label={n}><Icon name={n} /></Tool>
          ))}
          <RailLine />
          <Tool aria-label="Medir"><Icon name="ruler" /></Tool>
          <Tool aria-label="Acercar"><Icon name="zoomIn" /></Tool>
          <RailLine />
          {(['magnet', 'pencilLock', 'lock', 'eye', 'link'] as IconName[]).map(n => (
            <Tool key={n} aria-label={n}><Icon name={n} size={18} /></Tool>
          ))}
          <RailLine />
          <Tool aria-label="Eliminar"><Icon name="trash" size={18} /></Tool>
          <Spacer />
          <Tool $light aria-label="Favoritos"><Icon name="star" size={18} /></Tool>
        </LeftRail>

        <Center>
          <PlotRow>
            <Plot>
              <PriceChart />
              <Legend>
                <Row $gap={1}>
                  <PairIcon size={13} />
                  <Title>Euro/Dólar estadounidense · 15 · FOREXCOM</Title>
                  <Marks><Flag size={9} /><ReplayDot><Icon name="rewind" size={9} weight={3} tone="#fff" /></ReplayDot></Marks>
                </Row>
                <Row $gap={5}>
                  <Trade>1,14924<br />VENDER</Trade>
                  <Quantity>0.00000<input defaultValue="1" /></Quantity>
                  <Trade $buy>1,14924<br />COMPRAR</Trade>
                </Row>
              </Legend>
              <Floating $x={10} $y={52} $w={213}>
                <Grip />
                <button aria-label="Plantillas"><Icon name="layoutsPlus" size={16} /></button>
                <PenTool aria-label="Color"><Icon name="pen" size={15} /></PenTool>
                <WidthTool>2px</WidthTool>
                <button aria-label="Ajustes"><Icon name="hex" size={18} /></button>
                <button aria-label="Bloquear"><Icon name="lock" size={17} /></button>
                <button aria-label="Eliminar"><Icon name="trash" size={18} /></button>
                <button aria-label="Más"><Icon name="more" size={17} /></button>
              </Floating>
              <Floating $x={374} $y={25} $w={395}>
                <Grip />
                {DRAW_TOOLS.map((n, i) => (
                  <button key={i} aria-label={n}><Icon name={n} tone={n === 'brush' ? '#3b62d8' : '#dcdcdc'} /></button>
                ))}
              </Floating>
              <ZoomControls>
                {(['minus', 'plus', 'left', 'right'] as IconName[]).map(n => (
                  <button key={n} aria-label={n}><Icon name={n} size={12} weight={2.800} /></button>
                ))}
              </ZoomControls>
              <Brand href="#" aria-label="TradingView"><TvMark /></Brand>
            </Plot>
            <PriceAxis>
              <Band />
              <Gap $n={68} />
              {PRICES.map(p => <PriceTick key={p}>{p}</PriceTick>)}
              <Gap $n={17} />
            </PriceAxis>
            <Tag $y={10} $tone="light"><span>Máximo</span><span>1,14996</span></Tag>
            <Tag $y={14.8} $tone="dark"><span>EURUSD</span><span>1,14924</span></Tag>
            <Tag $y={51} $tone="dark"><span>1,14362</span></Tag>
            <Tag $y={91.800} $tone="light"><span>Mínimo</span><span>1,13730</span></Tag>
            <CurrencyBox>
              <select aria-label="Moneda"><option>USD</option></select>
              <Icon name="chevron" size={11} weight={3} />
            </CurrencyBox>
          </PlotRow>
          <TimeRow>
            <TimeAxis>
              <TimeBand />
              <TimeTicks>{TIMES.map((t, i) => <span key={i}>{t}</span>)}</TimeTicks>
              <TimeTag><span>mar 10 Jun '25</span><span>08:45</span></TimeTag>
            </TimeAxis>
            <AxisCorner aria-label="Ajustes del eje"><Icon name="hex" size={13} weight={2} /></AxisCorner>
          </TimeRow>

          <ReplayBar>
            <ReplayControls>
              <Icon name="replayPick" size={16} weight={1.600} />
              <Label $w={93}>Seleccionar la barra</Label>
              <IconButton $w={20} aria-label="Modo"><Icon name="chevron" size={12} weight={2} /></IconButton>
              <Divider $h={13} />
              <IconButton $w={35} aria-label="Reproducir"><Icon name="play" size={15} weight={1.800} /></IconButton>
              <IconButton $w={20} aria-label="Avanzar"><Icon name="step" size={14} weight={1.800} /></IconButton>
              <Label $w={28}>10x</Label><Label $w={24}>15m</Label>
              <Divider $h={13} $before={6} />
              <IconButton $w={33} aria-label="Tiempo real"><Icon name="skip" size={15} weight={1.800} /></IconButton>
            </ReplayControls>
            <IconButton aria-label="Salir"><Icon name="close" size={17} /></IconButton>
          </ReplayBar>
          <RangeBar>
            {['1D', '5D', '1M', '3M', '6M', 'YTD', '1A', '5A', 'Todos'].map(r => <Range key={r}>{r}</Range>)}
            <Divider />
            <IconButton $w={16} aria-label="Ir a"><Icon name="goTo" size={17} /></IconButton>
            <Spacer />
            <Label>23:33:43 UTC-5</Label>
          </RangeBar>
          <PanelTabs>
            <PanelTab $on>
              <ReplayBadge><Icon name="rewind" size={12} weight={3} tone="#111" /></ReplayBadge>
              <span>Reproducir trading</span>
              <Outline>Operar</Outline>
            </PanelTab>
            <PanelTab>Panel de trading</PanelTab>
            <Spacer />
            <IconButton aria-label="Abrir panel"><Icon name="chevronUp" size={17} /></IconButton>
            <IconButton $w={20} aria-label="Maximizar"><Icon name="full" size={16} /></IconButton>
          </PanelTabs>
        </Center>

        <Watchlist>
          <Collapse aria-label="Contraer" />
          <ListHeader>
            <button><Flag />L...<Icon name="chevron" size={12} weight={2} /></button>
            <IconButton aria-label="Añadir"><Icon name="plus" size={15} /></IconButton>
            <IconButton aria-label="Tabla"><Icon name="table" size={18} /></IconButton>
            <IconButton aria-label="Más"><Icon name="more" size={17} /></IconButton>
          </ListHeader>
          <Badges>
            <Round $on aria-label="Lista cian"><Flag size={8} /></Round>
            <Round aria-label="Lista azul"><Flag size={8} tone="#2f63e0" /></Round>
            <Round>N</Round>
          </Badges>
          <Quotes>
            <thead><tr><th>Símbolo</th><th>Cambio%</th></tr></thead>
            <tbody>
              {([['XAUUSD', '0,31%', 'gold'], ['EURUSD', '0,14%', 'eu'], ['AUDUSD', '0,23%', 'au']] as const).map(([s, c, k]) => (
                <Quote key={s} $on={s === 'EURUSD'}>
                  <td><Row $gap={3}><Flag size={8} /><PairIcon kind={k} size={13} /><span>{s}</span></Row></td>
                  <td>{c}</td>
                </Quote>
              ))}
            </tbody>
          </Quotes>
          <ListFooter>
            <PairIcon size={16} /><span>E..</span>
            <IconButton aria-label="Cuadrícula"><Icon name="layouts" size={18} /></IconButton>
            <IconButton aria-label="Editar"><Icon name="edit" size={17} /></IconButton>
            <IconButton aria-label="Más"><Icon name="more" size={17} /></IconButton>
          </ListFooter>
        </Watchlist>

        <RightRail>
          <RailButton $on $gap={5} aria-label="Lista"><Icon name="list" /></RailButton>
          <RailButton $gap={5} aria-label="Alertas"><Icon name="alarm" size={20} /><Badge>33</Badge></RailButton>
          <RailButton $gap={5} aria-label="Objetos"><Icon name="layers" size={20} /></RailButton>
          <RailButton $gap={5} aria-label="Chats"><Icon name="chat" size={20} /></RailButton>
          <Spacer />
          <RailButton aria-label="Filtros"><Icon name="radar" size={21} /></RailButton>
          <RailButton aria-label="Pine"><Icon name="mountain" size={20} /></RailButton>
          <RailButton aria-label="Calendario"><Icon name="calendar" size={20} /></RailButton>
          <RailButton aria-label="Noticias"><Icon name="feed" size={19} /><Badge>99+</Badge></RailButton>
          <RailButton aria-label="Notificaciones"><Icon name="bell" size={20} /></RailButton>
          <RailButton aria-label="Aplicaciones">
            <Apps><svg width="13" height="13" viewBox="0 0 13 13"><path d="M0 0h3v3H0zM5 0h3v3H5zM10 0h3v3h-3zM0 5h3v3H0zM5 5h3v3H5zM10 5h3v3h-3zM0 10h3v3H0zM5 10h3v3H5zM10 10h3v3h-3z" fill="#111" /></svg></Apps>
          </RailButton>
          <RailLine $tight />
          <RailButton aria-label="Ayuda"><Icon name="help" size={21} /></RailButton>
        </RightRail>
      </Main>

      <Taskbar>
        <Weather>
          <WeatherIcon>
            <svg width="20" height="20" viewBox="0 0 20 20"><path d="M4 12A7 7 0 0 0 13 3c4 4 3 9-1 11z" fill="#e8a94a" /><path d="M5 19a4 4 0 0 1 0-7c2-4 8-3 9 0 5 0 5 7 0 7z" fill="#c4d6f5" /></svg>
            <SoftBadge>2</SoftBadge>
          </WeatherIcon>
          <div>23°C<br />Mayorm. nublado</div>
        </Weather>
        <Row>
          <AppButton aria-label="Inicio">
            <svg width="16" height="16" viewBox="0 0 16 16"><path d="M0 0h7.500v7.500H0zM8.500 0H16v7.500H8.500zM0 8.500h7.500V16H0zM8.500 8.500H16V16H8.500z" fill="#49bff2" /></svg>
          </AppButton>
          <SearchBox>
            <Icon name="search" size={14} weight={2.400} />
            <input placeholder="Buscar" aria-label="Buscar" />
            <svg width="32" height="18" viewBox="0 0 32 18"><path d="M2 16C6 4 12 1 18 1s11 6 13 15z" fill="#28306e" /><path d="M3 15C8 8 11 8 16 11s9 2 14 4l-1 2H4z" fill="#5b7fd8" /><path d="M9 9c3-5 6-6 9-3s5 3 8 6c-6 1-8-3-11-3s-3 2-6 0z" fill="#3ec9a8" /><path d="M14 6l3-3 4 4z" fill="#e7eef8" /><path d="M5 14c6 3 10-2 16 1z" fill="#d9a0e8" /></svg>
          </SearchBox>
          {taskApps.map(a => <AppButton key={a.name} $on={a.on} aria-label={a.name}>{a.art}</AppButton>)}
        </Row>
        <Tray>
          <IconButton $w={20} aria-label="Iconos ocultos"><Icon name="chevronUp" size={9} weight={3} /></IconButton>
          <IconButton $w={23} aria-label="Nube"><svg width="12" height="10" viewBox="0 0 12 10"><path d="M3 9a3 3 0 0 1 0-5c1-4 6-4 7 0 3 1 2 5 0 5z" fill="#dcdcdc" /></svg></IconButton>
          <IconButton $w={22} aria-label="Micrófono"><Icon name="mic" size={12} weight={2.400} tone="#d08a6a" /></IconButton>
          <TrayText $w={21}>ESP<br />LAA</TrayText>
          <Status>
            <Icon name="wifi" size={11} weight={2.600} />
            <Icon name="sound" size={11} weight={2.200} />
            <svg width="14" height="8" viewBox="0 0 14 8"><rect x="0.5" y="0.500" width="12" height="7" rx="2" fill="none" stroke="#d8d8d8" /><rect x="1" y="1" width="6" height="6" rx="1" fill="#efb731" /></svg>
          </Status>
          <TrayText $w={53}>23:33<br />19/01/2026</TrayText>
        </Tray>
      </Taskbar>
    </Page>
  );
}
